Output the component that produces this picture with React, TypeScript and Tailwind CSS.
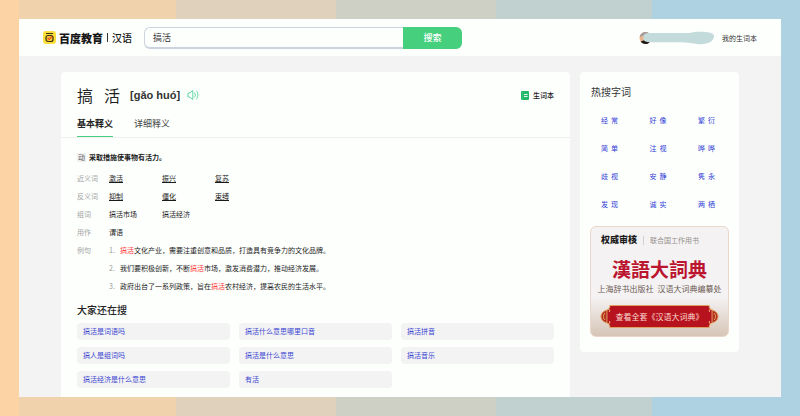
import React, { useState } from 'react';
import { clsx } from 'clsx';

const TABS = ['基本释义', '详细释义'];

const WORD_ROWS = [
  { label: '近义词', words: ['激活', '振兴', '复苏'], linked: true },
  { label: '反义词', words: ['抑制', '僵化', '束缚'], linked: true },
  { label: '组词', words: ['搞活市场', '搞活经济'], linked: false },
  { label: '用作', words: ['谓语'], linked: false },
];

const EXAMPLES = [
  ['', '文化产业，需要注重创意和品质，打造具有竞争力的文化品牌。'],
  ['我们要积极创新，不断', '市场，激发消费潜力，推动经济发展。'],
  ['政府出台了一系列政策，旨在', '农村经济，提高农民的生活水平。'],
];

const RELATED = [
  '搞活是词语吗',
  '搞活什么意思哪里口音',
  '搞活拼音',
  '搞人是组词吗',
  '搞活是什么意思',
  '搞活音乐',
  '搞活经济是什么意思',
  '有活',
];

const HOT_WORDS = ['经常', '好像', '繁衍', '简单', '注视', '哗哗', '歧视', '安静', '隽永', '发现', '诚实', '两栖'];

function LogoIcon() {
  return (
    <svg viewBox="0 0 13 13" className="size-[13px]" aria-hidden="true">
      <rect width="13" height="13" rx="3" fill="#fbdf3a" />
      <path d="M3 2.500h7" stroke="#3a3212" strokeWidth="1" />
      <rect x="3" y="4.500" width="7" height="6" rx="2" fill="#fbc92f" stroke="#3a3212" strokeWidth="1.200" />
      <path d="M4.700 7l1.400 1.400 2.800-2.900" fill="none" stroke="#f0502c" strokeWidth="1.300" />
    </svg>
  );
}

function SpeakerIcon() {
  return (
    <svg viewBox="0 0 12 12" className="size-3" fill="none" stroke="#5fd6a4" aria-hidden="true">
      <path d="M1 4h1.800L5.800 1.400v9.200L2.800 8H1z" strokeWidth="1" strokeLinejoin="round" />
      <path d="M7.700 3.900c.9 1.200.9 3 0 4.200M9.500 2c1.900 2.200 1.900 5.800 0 8" strokeWidth="1" strokeLinecap="round" />
    </svg>
  );
}

function NotebookIcon() {
  return (
    <svg viewBox="0 0 8 9" className="h-[9px] w-2" aria-hidden="true">
      <rect width="8" height="9" rx="1" fill="#22b869" />
      <path d="M1.500 0v9" stroke="#4cc98a" strokeWidth=".5" />
      <path d="M3 3.500h3.500M3 5.500h3.500" stroke="#e6f8ee" strokeWidth="1" />
    </svg>
  );
}

function UserBadge() {
  return (
    <svg viewBox="0 0 75 14" className="h-[14px] w-[75px]" aria-hidden="true">
      <circle cx="6.500" cy="7" r="6" fill="#e9b58f" />
      <path d="M.7 6A6 6 0 0 1 10.500 2.400L6 4z" fill="#a79c9c" />
      <path d="M1.600 10.500A6 6 0 0 0 10.500 11.500L6 9z" fill="#1d1718" />
      <path
        d="M5 4C6 2.500 8 2 11 2h39c3 0 5-1.400 9-1.200 4-.2 8 .2 11 .8 3 .6 5 1.400 5 3.400 0 3-2 5.200-5 6.600-4 1.900-11 2-15 .9-5-.8-11-1.300-17-1.300H11c-4 0-6-1-6.500-3C4.200 6.500 4.300 5 5 4z"
        fill="#c3dbda"
      />
    </svg>
  );
}

function Header() {
  const [query, setQuery] = useState('搞活');

  return (
    <header className="flex h-[37px] items-center bg-[#fdfffd] px-6">
      <a href="#home" className="flex items-center whitespace-nowrap text-[#161616]">
        <LogoIcon />
        <span className="ml-[3px] text-[11px] leading-4 font-black">百度教育</span>
        <span className="mx-1 h-[9px] w-px bg-[#333333]" />
        <span className="text-[10px] leading-4 font-medium">汉语</span>
      </a>
      <form className="ml-3 flex h-[22px] w-[318px]" onSubmit={(e) => e.preventDefault()}>
        <input
          type="text"
          aria-label="搜索"
          value={query}
          onChange={(e) => setQuery(e.target.value)}
          className="min-w-0 flex-1 rounded-l-md border border-r-0 border-b-2 border-[#cdd3de] bg-transparent px-2 pt-px text-[9px] text-[#333333] outline-none"
        />
        <button type="submit" className="w-[59px] rounded-r-md bg-[#46d07d] text-[9px] leading-[22px] font-medium text-white">
          搜索
        </button>
      </form>
      <div className="ml-auto flex items-center gap-2">
        <UserBadge />
        <a href="#words" className="text-[7px] leading-4 text-[#333333]">
          我的生词本
        </a>
      </div>
    </header>
  );
}

function Definition() {
  const [tab, setTab] = useState(TABS[0]);

  return (
    <main className="min-w-0 flex-1 rounded-t-sm bg-[#fdfffd] pt-[11px] pb-[9px]">
      <div className="flex h-6 items-center px-4">
        <h1 className="flex gap-[11px] text-[16px] leading-6 text-[#1f1f1f]">
          <span>搞</span>
          <span>活</span>
        </h1>
        <span className="ml-[10px] font-['Liberation_Sans',sans-serif] text-[11px] font-bold text-[#333333]">
          [gǎo huó]
        </span>
        <button type="button" aria-label="朗读" className="ml-[7px]">
          <SpeakerIcon />
        </button>
        <button
          type="button"
          className="ml-auto flex items-center gap-1 text-[7px] leading-6 font-medium text-[#222222]"
        >
          <NotebookIcon />
          生词本
        </button>
      </div>

      <div className="mt-[5px] flex gap-[21px] border-b border-[#eeefee] px-4">
        {TABS.map((name) => (
          <button
            key={name}
            type="button"
            onClick={() => setTab(name)}
            className={clsx(
              'h-[25px] border-b text-[9px]',
              tab === name ? 'border-[#46d07d] font-bold text-[#222222]' : 'border-transparent text-[#444444]'
            )}
          >
            {name}
          </button>
        ))}
      </div>

      <div className="px-4 pt-[10px] text-[7px] leading-[18px] text-[#1a1a1a]">
        <p className="mb-[3px] flex items-center gap-[3px]">
          <span className="bg-[#f0f0f0] px-px leading-[9px] text-[#555555]">动</span>
          <span className="font-bold">采取措施使事物有活力。</span>
        </p>
        <dl>
          {WORD_ROWS.map((row) => (
            <div key={row.label} className="flex">
              <dt className="w-8 text-[#a3a3a3]">{row.label}</dt>
              <dd className="flex">
                {row.words.map((word) => (
                  <span key={word} className="w-[53px]">
                    {row.linked ? (
                      <a href={`#${word}`} className="underline underline-offset-1">
                        {word}
                      </a>
                    ) : (
                      word
                    )}
                  </span>
                ))}
              </dd>
            </div>
          ))}
          <div className="flex">
            <dt className="w-8 text-[#a3a3a3]">例句</dt>
            <dd>
              <ol>
                {EXAMPLES.map(([before, after], i) => (
                  <li key={after} className="flex">
                    <span className="w-[11px] text-[#999999]">{i + 1}.</span>
                    <span>
                      {before}
                      <em className="text-[#ff3b3b] not-italic">搞活</em>
                      {after}
                    </span>
                  </li>
                ))}
              </ol>
            </dd>
          </div>
        </dl>
      </div>

      <section className="mt-[7px] px-4">
        <h2 className="text-[10px] leading-4 font-medium text-[#222222]">大家还在搜</h2>
        <div className="mt-[5px] grid grid-cols-3 gap-x-[9px] gap-y-[7px]">
          {RELATED.map((text) => (
            <a
              key={text}
              href={`#${text}`}
              className="rounded bg-[#f3f3f4] px-[6px] text-[7px] leading-[17px] text-[#3a45d0]"
            >
              {text}
            </a>
          ))}
        </div>
      </section>
    </main>
  );
}

function Ribbon() {
  return (
    <svg viewBox="0 0 120 23" preserveAspectRatio="none" className="absolute inset-0 size-full" aria-hidden="true">
      <path d="M9 5C4 5 1 8 1 11.500S4 18 9 18zM111 5c5 0 8 3 8 6.500S116 18 111 18z" fill="#b5301f" stroke="#dda163" />
      <path d="M5 8c-2 1-2 6 0 7M115 8c2 1 2 6 0 7" fill="none" stroke="#e0a465" />
      <path
        d="M10 .5h100c0 2.500 1 4 3 4v14c-2 0-3 1.500-3 4H10c0-2.500-1-4-3-4v-14c2 0 3-1.500 3-4z"
        fill="#b7131f"
        stroke="#dda163"
      />
      <path
        d="M7 5a1.500 1.500 0 1 1 2 2M7 18a1.500 1.500 0 1 0 2-2M113 5a1.500 1.500 0 1 0-2 2M113 18a1.500 1.500 0 1 1-2-2"
        fill="none"
        stroke="#ecb878"
      />
    </svg>
  );
}

function DictionaryCard() {
  return (
    <div className="mx-[10px] mt-2 rounded-md border border-[#ead6ca] bg-linear-to-b from-[#f4f2f2] from-65% to-[#d6c5b7] px-[9px] pt-[6px] pb-2 text-center whitespace-nowrap">
      <div className="flex items-center gap-[6px] pl-px leading-[14px]">
        <strong className="text-[9px] font-black text-[#1c1c1c]">权威审核</strong>
        <span className="h-[9px] w-px bg-[#d0d0d0]" />
        <span className="text-[7px] text-[#94908e]">联合国工作用书</span>
      </div>
      <h3 className="mt-[10px] text-[19px] leading-6 font-bold text-[#bb1530]">漢語大詞典</h3>
      <p className="mt-[2px] flex justify-center gap-1 text-[8px] leading-3 text-[#6b5a54]">
        <span>上海辞书出版社</span>
        <span>汉语大词典编纂处</span>
      </p>
      <a href="#dictionary" className="relative mt-[10px] block h-[23px] text-[8px] leading-[23px] text-[#fbdcd0]">
        <Ribbon />
        <span className="relative">查看全套《汉语大词典》</span>
      </a>
    </div>
  );
}

function HotWords() {
  return (
    <aside className="w-[159px] shrink-0 self-start rounded-sm bg-[#fdfffd] pt-3 pb-[15px]">
      <h2 className="px-[11px] text-[10px] leading-4 text-[#333333]">热搜字词</h2>
      <div className="mt-[6px] grid grid-cols-[repeat(3,auto)] justify-between pr-6 pl-[21px]">
        {HOT_WORDS.map((word) => (
          <a key={word} href={`#${word}`} className="flex gap-[3px] text-[7px] leading-7 text-[#2f3bd6]">
            {word.split('').map((char, i) => (
              <span key={i}>{char}</span>
            ))}
          </a>
        ))}
      </div>
      <DictionaryCard />
    </aside>
  );
}

export default function App() {
  return (
    <div
      lang="zh-CN"
      className="flex min-h-screen bg-[linear-gradient(90deg,#fcd3a5_0_2.4%,#f0d2ac_2.4%_22%,#dfd1bc_22%_42%,#cfd0c5_42%_62%,#c0d1d0_62%_81.5%,#aed2e1_81.5%)] p-[19px] font-['Noto_Sans_CJK_SC','Liberation_Sans',sans-serif]"
    >
      <div className="min-w-0 flex-1 bg-[#f3f3f3]">
        <Header />
        <div className="flex gap-[10px] px-[42px] pt-4">
          <Definition />
          <HotWords />
        </div>
      </div>
    </div>
  );
}
